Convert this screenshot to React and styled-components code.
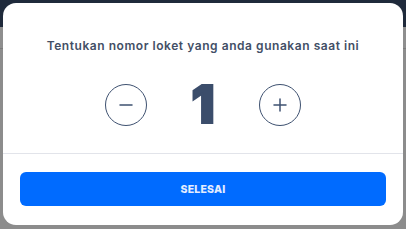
import React, { useState } from "react";
import styled, { createGlobalStyle } from "styled-components";

const Global = createGlobalStyle`
  html, body { margin: 0; padding: 0; }
  body { font-family: "Inter", "Noto Sans", sans-serif; }
`;

const Page = styled.div`
  position: relative;
  width: 406px;
  height: 229px;
  overflow: hidden;
  display: flex;
  flex-direction: column;
  background: #8e8e8e;
`;

const TopBar = styled.div`
  height: 27px;
  background: #1f2a3b;
`;

const Strip = styled.div`
  height: 21px;
  border-bottom: 1px solid #7b7b7b;
`;

const Rest = styled.div`
  flex: 1;
  background: #8c8c8c;
`;

const Modal = styled.div`
  position: absolute;
  left: 3px;
  top: 3px;
  width: 400px;
  height: 222px;
  background: #fff;
  border-radius: 13px;
  display: flex;
  flex-direction: column;
`;

const Body = styled.div`
  height: 151px;
  display: flex;
  flex-direction: column;
  align-items: center;
  padding-top: 34px;
  box-sizing: border-box;
  border-bottom: 1px solid #e2e4ea;
`;

const Title = styled.div`
  font-size: 12px;
  font-weight: 600;
  color: #434f66;
  line-height: 18px;
  letter-spacing: 0.55px;
`;

const Counter = styled.div`
  margin-top: 29px;
  display: flex;
  align-items: center;
  gap: 21px;
`;

const Round = styled.button`
  width: 42px;
  height: 42px;
  border-radius: 50%;
  border: 1.2px solid #3e5170;
  background: #fff;
  padding: 0;
  display: flex;
  align-items: center;
  justify-content: center;
  color: #3e5170;
`;

const Number = styled.div`
  width: 70px;
  text-align: center;
  font-size: 52px;
  font-weight: 900;
  color: #3b4d6b;
  -webkit-text-stroke: 2px #3b4d6b;
  line-height: 42px;
`;

const Footer = styled.div`
  flex: 1;
  padding: 18px 17px 0;
`;

const Done = styled.button`
  width: 100%;
  height: 34px;
  border: none;
  border-radius: 6px;
  background: #006bff;
  color: #e4edff;
  font-family: "Inter", sans-serif;
  font-size: 10.5px;
  font-weight: 800;
  letter-spacing: 0.2px;
`;

const Icon = ({ plus }) => (
  <svg width="16" height="16" viewBox="0 0 16 16">
    <path d="M2 8 H14" stroke="currentColor" strokeWidth="1.5" strokeLinecap="round" />
    {plus && <path d="M8 2 V14" stroke="currentColor" strokeWidth="1.5" strokeLinecap="round" />}
  </svg>
);

export default function App() {
  const [n, setN] = useState(1);
  return (
    <Page>
      <Global />
      <TopBar />
      <Strip />
      <Rest />
      <Modal>
        <Body>
          <Title>Tentukan nomor loket yang anda gunakan saat ini</Title>
          <Counter>
            <Round onClick={() => setN(Math.max(1, n - 1))}>
              <Icon />
            </Round>
            <Number>{n}</Number>
            <Round onClick={() => setN(n + 1)}>
              <Icon plus />
            </Round>
          </Counter>
        </Body>
        <Footer>
          <Done>SELESAI</Done>
        </Footer>
      </Modal>
    </Page>
  );
}
